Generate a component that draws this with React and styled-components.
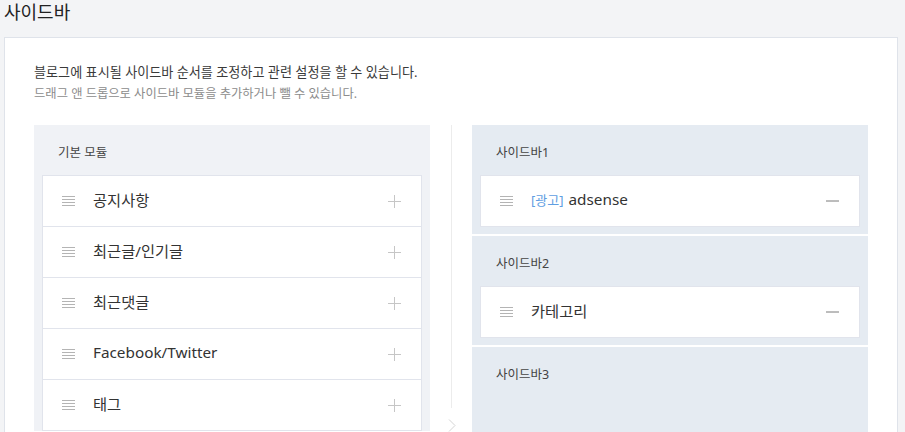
import React from "react";
import styled, { createGlobalStyle } from "styled-components";

const GlobalStyle = createGlobalStyle`
  html, body {
    margin: 0;
    padding: 0;
    overflow: hidden;
    background: #f3f4f6;
  }
  body {
    font-family: "Noto Sans", "Noto Sans CJK KR", sans-serif;
    color: #333;
  }
`;

const Page = styled.div`
  padding: 0 7px 0 4px;
`;

const Title = styled.h1`
  margin: 0;
  height: 37px;
  font-size: 18px;
  font-weight: 400;
  line-height: 24px;
  color: #222;
`;

const Card = styled.section`
  background: #fff;
  border: 1px solid #dfe3ea;
  padding: 24px 29px 0;
  height: 500px;
`;

const Desc = styled.p`
  margin: 0;
  font-size: ${(p) => (p.$sub ? "12.3px" : "13.1px")};
  line-height: 21px;
  color: ${(p) => (p.$sub ? "#8c8c8c" : "#3a3a3a")};
`;

const Columns = styled.div`
  margin-top: 21px;
  display: grid;
  grid-template-columns: 396px 42px 396px;
  align-items: start;
`;

const LeftPanel = styled.div`
  background: #f0f2f6;
  padding: 0 8px;
`;

const PanelLabel = styled.div`
  height: 50px;
  padding: 2px 0 0 16px;
  box-sizing: border-box;
  display: flex;
  align-items: center;
  font-size: 12.5px;
  color: #444;
`;

const ItemList = styled.div`
  display: flex;
  flex-direction: column;
`;

const Item = styled.div`
  height: 52px;
  box-sizing: border-box;
  background: #fff;
  border: 1px solid #e1e4ec;
  display: flex;
  align-items: center;
  padding: 0 20px 0 19px;
  & + & {
    margin-top: -1px;
  }
`;

const ItemName = styled.span`
  flex: 1;
  margin-left: 18px;
  padding-bottom: 4px;
  font-size: 15.3px;
  color: #333;
  white-space: nowrap;
`;

const AdTag = styled.span`
  font-size: 13px;
  color: #5f9ee2;
  margin-right: 5px;
`;

const Divider = styled.div`
  display: flex;
  flex-direction: column;
  align-items: center;
`;

const DividerLine = styled.div`
  width: 1px;
  height: 283px;
  background: #ececec;
  margin-left: 1px;
`;

const Chevron = styled.svg`
  margin-top: 11px;
  margin-left: 2px;
`;

const RightColumn = styled.div`
  display: flex;
  flex-direction: column;
  gap: 2px;
`;

const SidebarBox = styled.div`
  background: #e5ebf2;
  padding: 0 8px 7px;
  min-height: 109px;
  box-sizing: border-box;
`;

const DragIcon = () => (
  <svg width="13" height="10" viewBox="0 0 13 10" style={{ flexShrink: 0 }}>
    {[0.5, 3.5, 6.5, 9.5].map((y) => (
      <line key={y} x1="0" x2="13" y1={y} y2={y} stroke="#b4b4b4" strokeWidth="1" />
    ))}
  </svg>
);

const PlusIcon = () => (
  <svg width="13" height="13" viewBox="0 0 13 13">
    <line x1="6.5" y1="0" x2="6.5" y2="13" stroke="#c6c6c6" />
    <line x1="0" y1="6.5" x2="13" y2="6.5" stroke="#c6c6c6" />
  </svg>
);

const MinusIcon = () => (
  <svg width="13" height="3" viewBox="0 0 13 3">
    <line x1="0" y1="1" x2="13" y2="1" stroke="#7a7a7a" />
  </svg>
);

const modules = ["공지사항", "최근글/인기글", "최근댓글", "Facebook/Twitter", "태그"];

const sidebars = [
  { name: "사이드바1", items: [{ ad: true, label: "adsense" }] },
  { name: "사이드바2", items: [{ label: "카테고리" }] },
  { name: "사이드바3", items: [] },
];

export default function App() {
  return (
    <>
      <GlobalStyle />
      <Page>
        <Title>사이드바</Title>
        <Card>
          <Desc>블로그에 표시될 사이드바 순서를 조정하고 관련 설정을 할 수 있습니다.</Desc>
          <Desc $sub>드래그 앤 드롭으로 사이드바 모듈을 추가하거나 뺄 수 있습니다.</Desc>
          <Columns>
            <LeftPanel>
              <PanelLabel>기본 모듈</PanelLabel>
              <ItemList>
                {modules.map((m) => (
                  <Item key={m}>
                    <DragIcon />
                    <ItemName>{m}</ItemName>
                    <PlusIcon />
                  </Item>
                ))}
              </ItemList>
            </LeftPanel>
            <Divider>
              <DividerLine />
              <Chevron width="8" height="13" viewBox="0 0 8 13">
                <polyline points="1,0.5 7,6.5 1,12.5" fill="none" stroke="#d4d4d4" strokeWidth="1" />
              </Chevron>
            </Divider>
            <RightColumn>
              {sidebars.map((s) => (
                <SidebarBox key={s.name}>
                  <PanelLabel>{s.name}</PanelLabel>
                  <ItemList>
                    {s.items.map((it) => (
                      <Item key={it.label}>
                        <DragIcon />
                        <ItemName>
                          {it.ad && <AdTag>[광고]</AdTag>}
                          {it.label}
                        </ItemName>
                        <MinusIcon />
                      </Item>
                    ))}
                  </ItemList>
                </SidebarBox>
              ))}
            </RightColumn>
          </Columns>
        </Card>
      </Page>
    </>
  );
}
